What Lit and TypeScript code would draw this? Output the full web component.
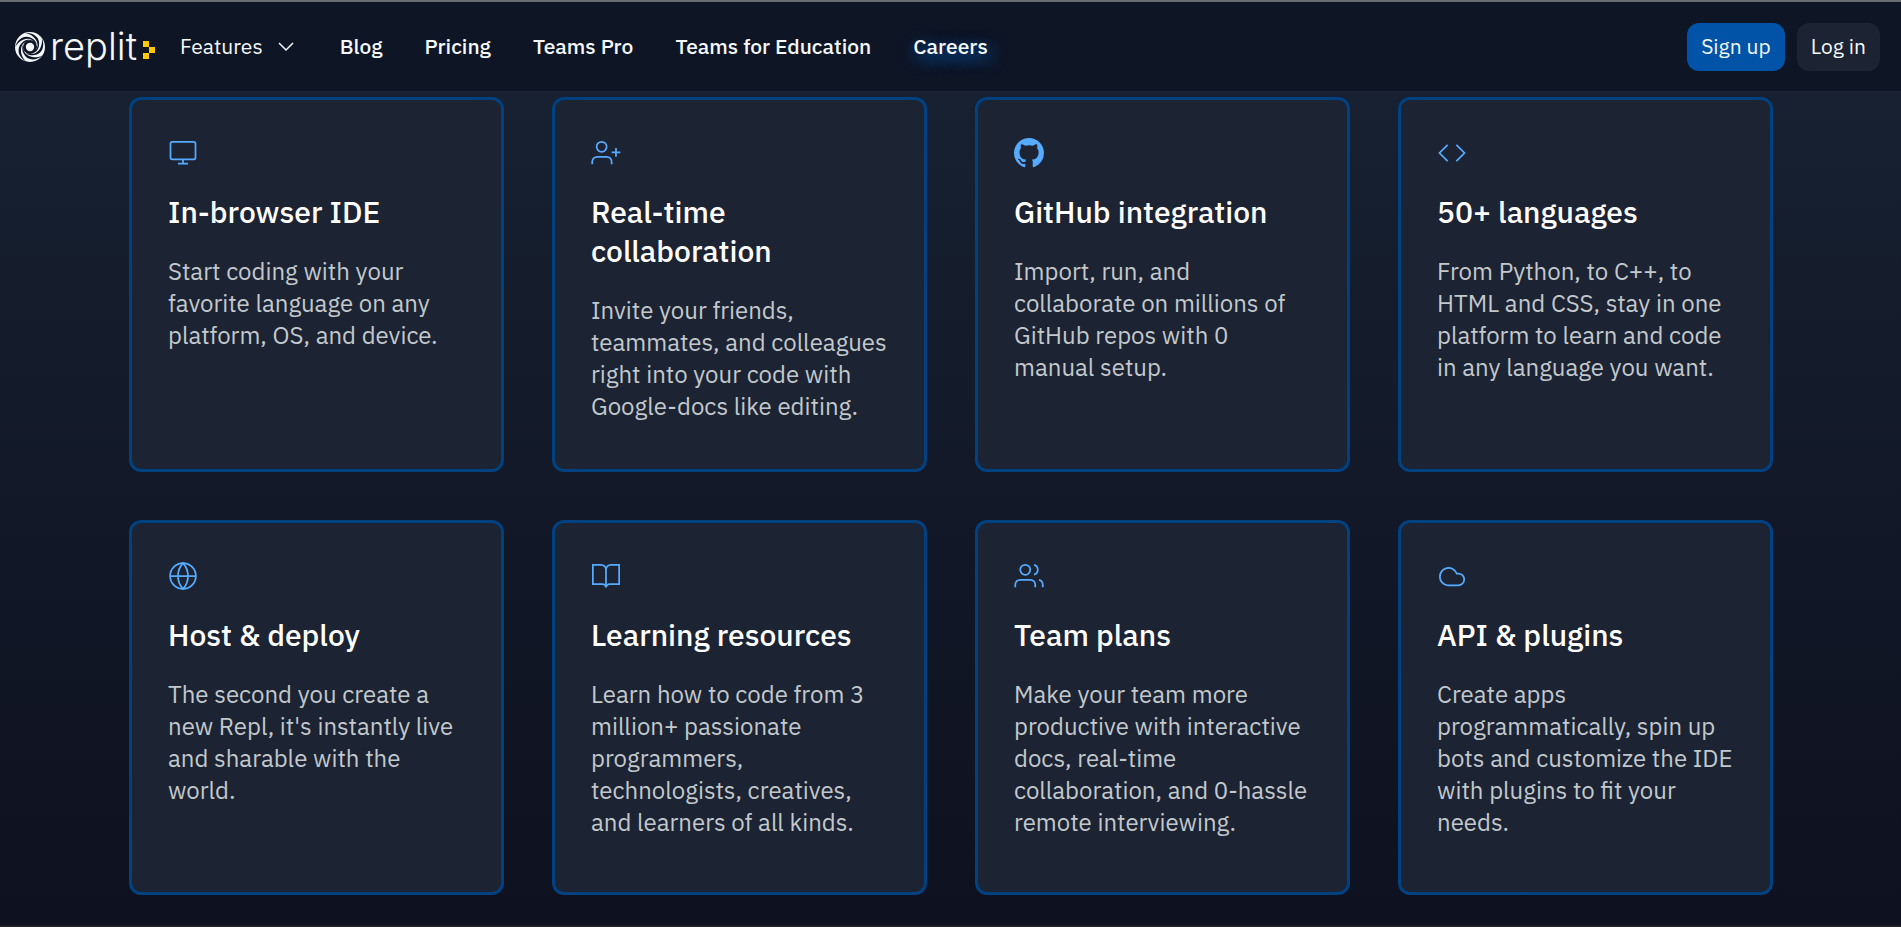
import { LitElement, html, css, svg } from "lit";
import { customElement, property } from "lit/decorators.js";

const line = (body: unknown) => html`<svg viewBox="0 0 24 24" fill="none" stroke="currentColor" stroke-width="1.400" aria-hidden="true">${body}</svg>`;

const icons: Record<string, unknown> = {
  monitor: line(svg`<rect x="2" y="3" width="20" height="14" rx="1.5"/><path d="M12 17v4M8 20.5h8"/>`),
  invite: line(svg`<circle cx="8.5" cy="7" r="4"/><path d="M1 21v-2a4 4 0 0 1 4-4h7.500a4 4 0 0 1 4 4v2M20 8v7M16.500 11.500h7"/>`),
  github: html`<svg viewBox="0 0 16 16" fill="currentColor" aria-hidden="true"><path d="M8 0C3.58 0 0 3.58 0 8c0 3.54 2.29 6.53 5.47 7.59.4.07.55-.17.55-.38 0-.19-.01-.82-.01-1.49-2.01.37-2.53-.49-2.69-.94-.09-.23-.48-.94-.82-1.13-.28-.15-.68-.52-.01-.53.63-.01 1.08.58 1.23.82.72 1.21 1.87.87 2.33.66.07-.52.28-.87.51-1.07-1.78-.2-3.64-.89-3.64-3.95 0-.87.31-1.59.82-2.15-.08-.2-.36-1.02.08-2.12 0 0 .67-.21 2.2.82.64-.18 1.32-.27 2-.27s1.36.09 2 .27c1.53-1.04 2.2-.82 2.2-.82.44 1.1.16 1.92.08 2.12.51.56.82 1.27.82 2.15 0 3.07-1.87 3.75-3.65 3.95.29.25.54.73.54 1.48 0 1.07-.01 1.93-.01 2.2 0 .21.15.46.55.38A8.01 8.01 0 0 0 16 8c0-4.42-3.58-8-8-8z"/></svg>`,
  code: line(svg`<path d="M8.500 5.500 2 12 8.500 18.500M15.500 5.500 22 12 15.500 18.500"/>`),
  globe: line(svg`<circle cx="12" cy="12" r="10.300"/><path d="M1.700 12h20.600M12 1.700c2.700 2.900 4 6.500 4 10.300s-1.300 7.400-4 10.300c-2.700-2.900-4-6.500-4-10.300s1.300-7.400 4-10.300z"/>`),
  book: line(svg`<path d="M1.500 3H8a4 4 0 0 1 4 4v14a3 3 0 0 0-3-2.500H1.500zM22.500 3H16a4 4 0 0 0-4 4v14a3 3 0 0 1 3-2.500h7.500z"/>`),
  team: line(svg`<circle cx="9" cy="7" r="4"/><path d="M1 21v-2a4 4 0 0 1 4-4h8a4 4 0 0 1 4 4v2M23 21v-2a4 4 0 0 0-3-3.870M16 3.130a4 4 0 0 1 0 7.750"/>`),
  cloud: line(svg`<path d="M17 10h-1.200A7 7 0 1 0 8.500 19.500H17a4.750 4.750 0 0 0 0-9.500z"/>`),
};

interface Feature {
  icon: string;
  title: string;
  text: string;
}

const features: Feature[] = [
  { icon: "monitor", title: "In-browser IDE", text: "Start coding with your favorite language on any platform, OS, and device." },
  { icon: "invite", title: "Real-time collaboration", text: "Invite your friends, teammates, and colleagues right into your code with Google-docs like editing." },
  { icon: "github", title: "GitHub integration", text: "Import, run, and collaborate on millions of GitHub repos with 0 manual setup." },
  { icon: "code", title: "50+ languages", text: "From Python, to C++, to HTML and CSS, stay in one platform to learn and code in any language you want." },
  { icon: "globe", title: "Host & deploy", text: "The second you create a new Repl, it's instantly live and sharable with the world." },
  { icon: "book", title: "Learning resources", text: "Learn how to code from 3 million+ passionate programmers, technologists, creatives, and learners of all kinds." },
  { icon: "team", title: "Team plans", text: "Make your team more productive with interactive docs, real-time collaboration, and 0-hassle remote interviewing." },
  { icon: "cloud", title: "API & plugins", text: "Create apps programmatically, spin up bots and customize the IDE with plugins to fit your needs." },
];

@customElement("site-header")
class SiteHeader extends LitElement {
  static styles = css`
    :host { display: block; }
    .bar {
      display: flex;
      align-items: center;
      box-sizing: border-box;
      min-height: 92px;
      padding: 0 21px 0 15px;
      border-top: 2px solid #6b6e74;
      border-bottom: 1px solid #1c2333;
      background: #0e1525;
      color: #f5f9fc;
      font-size: 21px;
      line-height: 28px;
    }
    a { color: inherit; text-decoration: none; }
    .logo { display: flex; align-items: center; }
    .swirl { width: 30px; height: 30px; }
    .word {
      margin-left: 5px;
      font-family: Inter, sans-serif;
      font-weight: 300;
      font-size: 38px;
      line-height: 44px;
      padding-bottom: 2px;
    }
    .pixels { width: 12px; height: 18px; margin: 6px 0 0 6px; }
    nav {
      display: flex;
      align-items: center;
      gap: 42px;
      margin-left: 25px;
      padding-bottom: 2px;
      font-weight: 500;
    }
    button { font: inherit; color: inherit; border: 0; cursor: pointer; }
    .menu {
      display: flex;
      align-items: center;
      gap: 11px;
      padding: 0;
      background: none;
      font-weight: 400;
    }
    .chevron { width: 24px; height: 24px; }
    .glow { text-shadow: 3px 5px 16px #0079f2; }
    .account { display: flex; gap: 12px; margin-left: auto; }
    .account button { height: 48px; padding: 0 14px 2px; border-radius: 12px; background: #1c2333; }
    .account .primary { background: #0053a6; }
  `;

  render() {
    return html`
      <header class="bar">
        <a class="logo" href="#" aria-label="replit home">
          <svg class="swirl" viewBox="0 0 30 30" aria-hidden="true">
            <circle cx="15" cy="15" r="15" fill="#f5f9fc" />
            <circle cx="15" cy="15" r="7" fill="#0e1525" />
            <circle cx="15" cy="15" r="4.200" fill="#f5f9fc" />
            <g fill="#0e1525">
              ${[0, 72, 144, 216, 288].map((a) => svg`<path transform="rotate(${a} 15 15)" d="M10 1C19 0 25.500 6 24 13.500C23.500 17 22 19 19.500 21C21.500 17.500 22.800 15 22.500 12C21.500 6 16 2 10 1Z" />`)}
            </g>
          </svg>
          <span class="word">replit</span>
          <svg class="pixels" viewBox="0 0 12 18" fill="#ffc800" aria-hidden="true">
            <path d="M0 0h6v6H0zM6 6h6v6H6zM0 12h6v6H0z" />
          </svg>
        </a>
        <nav aria-label="Main">
          <button class="menu" type="button" aria-haspopup="true">
            Features
            <svg class="chevron" viewBox="0 0 24 24" fill="none" stroke="currentColor" stroke-width="1.500" aria-hidden="true">
              <path d="m5 9 7 7 7-7" />
            </svg>
          </button>
          <a href="#blog">Blog</a>
          <a href="#pricing">Pricing</a>
          <a href="#teams-pro">Teams Pro</a>
          <a href="#education">Teams for Education</a>
          <a class="glow" href="#careers">Careers</a>
        </nav>
        <div class="account">
          <button class="primary" type="button">Sign up</button>
          <button type="button">Log in</button>
        </div>
      </header>
    `;
  }
}

@customElement("feature-card")
class FeatureCard extends LitElement {
  @property({ attribute: false }) feature!: Feature;

  static styles = css`
    :host {
      display: block;
      box-sizing: border-box;
      aspect-ratio: 1;
      padding: 38px 36px 36px;
      border: 3px solid #004182;
      border-radius: 12px;
      background: #1c2333;
    }
    .icon { color: #57abff; height: 30px; margin-bottom: 24px; }
    .icon svg { display: block; width: 30px; height: 30px; }
    h3 {
      margin: 0 0 24px;
      color: #ffffff;
      font-weight: 500;
      font-size: 30px;
      line-height: 39px;
    }
    p { margin: 0; color: #c2c8cc; font-size: 24px; line-height: 32px; }
  `;

  render() {
    return html`
      <div class="icon">${icons[this.feature.icon]}</div>
      <h3>${this.feature.title}</h3>
      <p>${this.feature.text}</p>
    `;
  }
}

@customElement("app-root")
class AppRoot extends LitElement {
  static styles = css`
    :host {
      display: flex;
      flex-direction: column;
      box-sizing: border-box;
      min-height: 100vh;
      border-bottom: 2px solid #1f1e24;
      background: #0e111f;
      font-family: "IBM Plex Sans", Roboto, sans-serif;
    }
    main {
      flex: 1;
      padding: 5px 23px 30px 24px;
      background: linear-gradient(#172131, #121828 50%, #0e111f);
    }
    .grid {
      display: grid;
      grid-template-columns: repeat(4, minmax(0, 1fr));
      gap: 48px;
      max-width: 1644px;
      margin: 0 auto;
    }
    @media (max-width: 1500px) {
      .grid { grid-template-columns: repeat(auto-fit, minmax(340px, 1fr)); }
    }
  `;

  render() {
    return html`
      <site-header></site-header>
      <main>
        <section class="grid" aria-label="Product features">
          ${features.map((f) => html`<feature-card .feature=${f}></feature-card>`)}
        </section>
      </main>
    `;
  }
}
